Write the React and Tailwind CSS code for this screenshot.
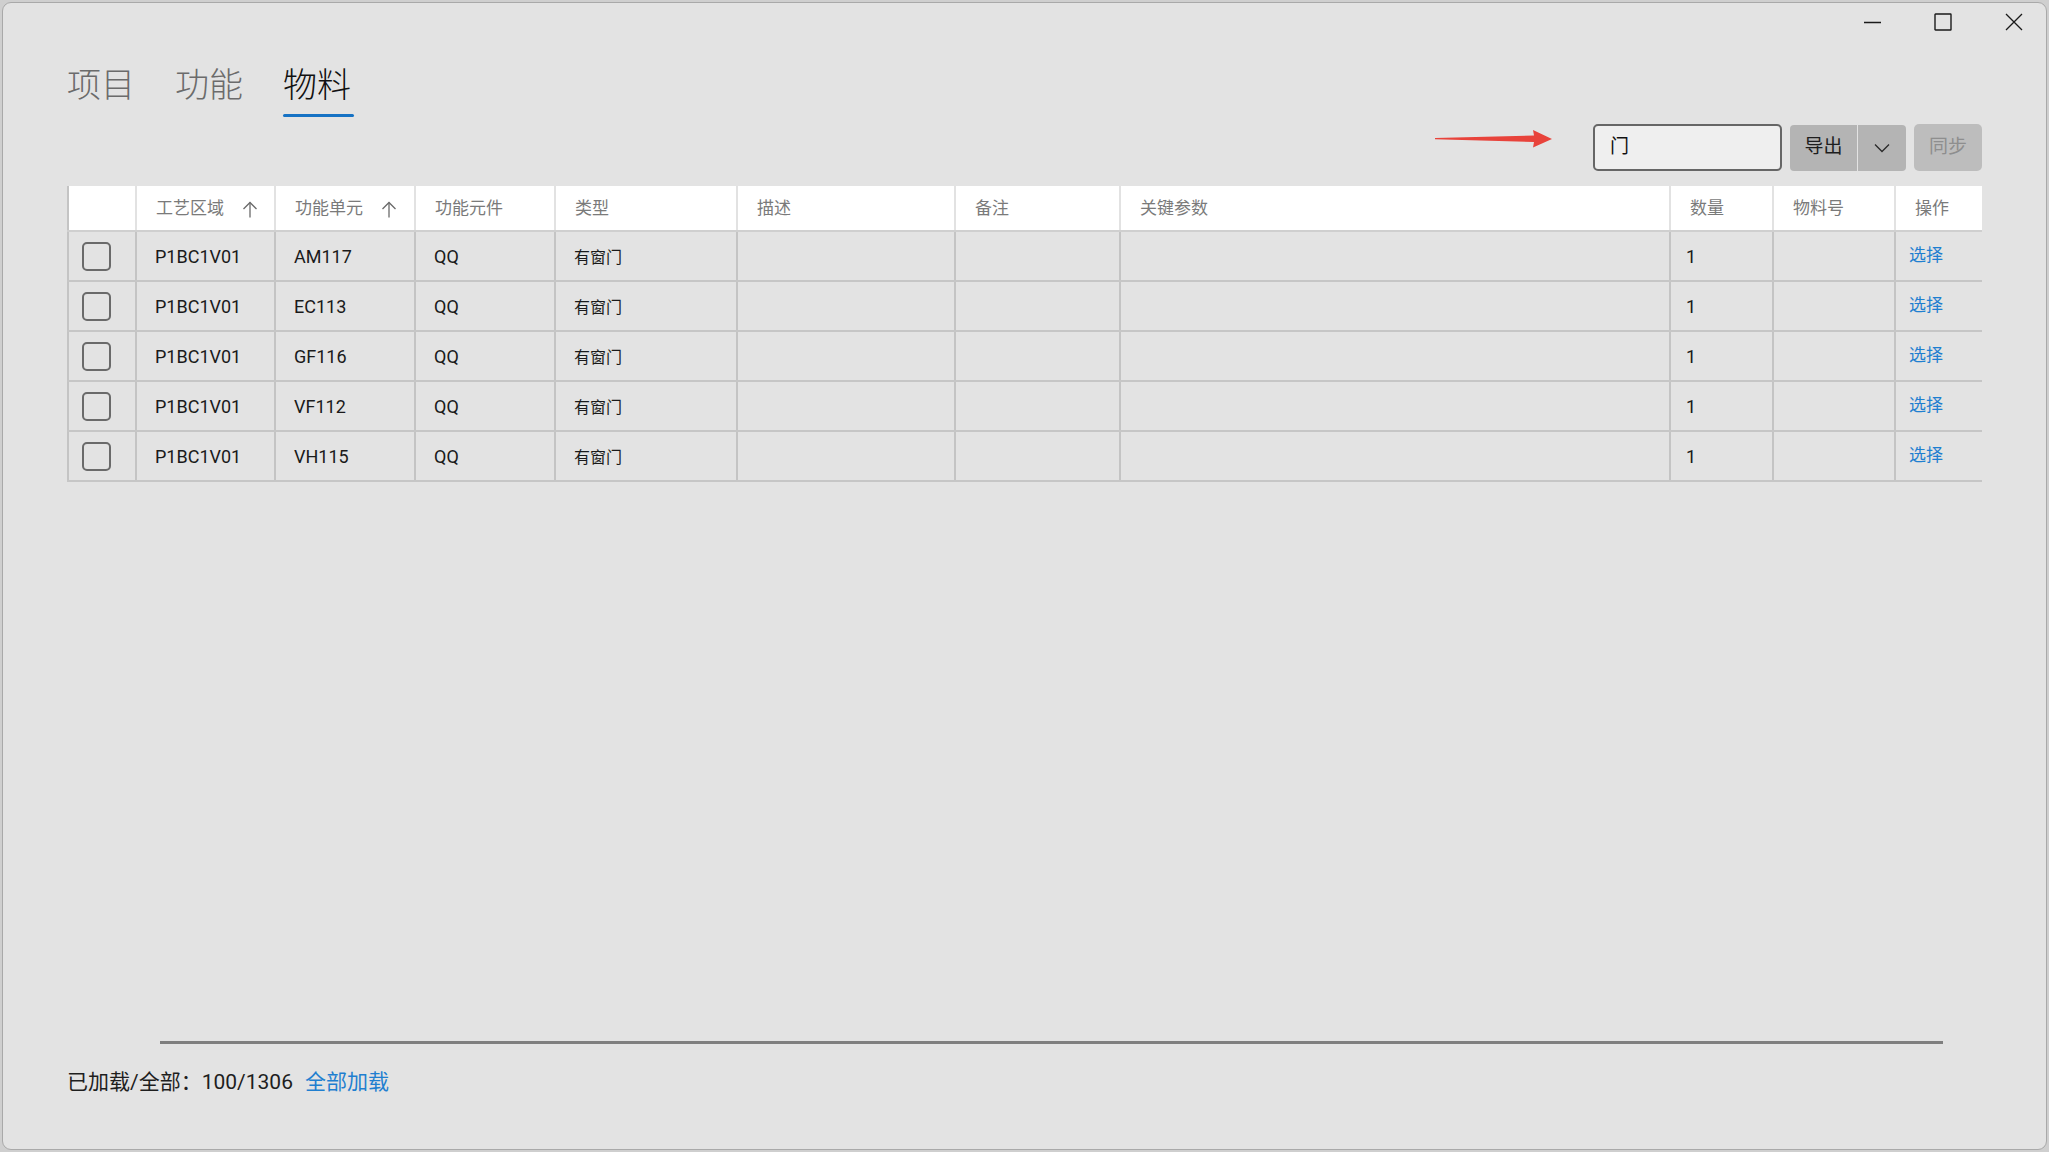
import React from 'react'

const cols = 'grid grid-cols-[68px_139px_140px_140px_182px_218px_165px_550px_103px_122px_88px]'

const headers = ['', '工艺区域', '功能单元', '功能元件', '类型', '描述', '备注', '关键参数', '数量', '物料号', '操作']

const rows = [
  ['P1BC1V01', 'AM117'],
  ['P1BC1V01', 'EC113'],
  ['P1BC1V01', 'GF116'],
  ['P1BC1V01', 'VF112'],
  ['P1BC1V01', 'VH115'],
]

const SortArrow = () => (
  <svg width="16" height="18" viewBox="0 0 16 18" fill="none" stroke="#6a6a6a" strokeWidth="1.3">
    <path d="M8 2.5V17.5" />
    <path d="M1.5 9L8 2.5L14.5 9" />
  </svg>
)

const WindowControls = () => (
  <div className="flex justify-end gap-[7px] h-[38px]">
    <div className="w-[64px] flex items-center justify-center">
      <svg width="18" height="18" viewBox="0 0 18 18" stroke="#1a1a1a" strokeWidth="1.3">
        <path d="M1 9.5H18" />
      </svg>
    </div>
    <div className="w-[64px] flex items-center justify-center">
      <svg width="18" height="18" viewBox="0 0 18 18" fill="none" stroke="#1a1a1a" strokeWidth="1.4">
        <rect x="1" y="1" width="16" height="16" rx="0.5" />
      </svg>
    </div>
    <div className="w-[64px] flex items-center justify-center">
      <svg width="18" height="18" viewBox="0 0 18 18" fill="none" stroke="#1a1a1a" strokeWidth="1.3">
        <path d="M1 1L17 17M17 1L1 17" />
      </svg>
    </div>
  </div>
)

const cell = 'flex items-center pl-[18px] border-l-2 border-[#c4c4c4] text-[18px] text-[#1a1a1a] whitespace-nowrap'

const App = () => {
  return (
    <div
      className="w-screen h-[1152px] bg-[#cfcfcf] p-[2px]"
      style={{ fontFamily: 'Roboto, "Noto Sans CJK SC", sans-serif' }}
    >
      <div className="h-full rounded-[9px] border border-[#a9a9a9] bg-[#e3e3e3] flex flex-col overflow-hidden">
        <WindowControls />

        <div className="px-[64px]">
          {/* tabs */}
          <div className="flex gap-[40px] mt-[22px]">
            <div className="flex flex-col">
              <span className="text-[34px] leading-[40px] text-[#6b6b6b]" style={{ fontFamily: '"Noto Sans CJK SC", sans-serif', fontWeight: 300 }}>项目</span>
              <div className="h-[3px] mt-[11px]" />
            </div>
            <div className="flex flex-col">
              <span className="text-[34px] leading-[40px] text-[#6b6b6b]" style={{ fontFamily: '"Noto Sans CJK SC", sans-serif', fontWeight: 300 }}>功能</span>
              <div className="h-[3px] mt-[11px]" />
            </div>
            <div className="flex flex-col">
              <span className="text-[34px] leading-[40px] text-[#111111]" style={{ fontFamily: '"Noto Sans CJK SC", sans-serif', fontWeight: 300 }}>物料</span>
              <div className="h-[3px] w-[71px] mt-[11px] bg-[#1672c4] rounded-full" />
            </div>
          </div>

          {/* toolbar */}
          <div className="flex justify-end items-center mt-[7px] h-[47px]">
            <svg className="mr-[40px] mb-[18px]" width="118" height="20" viewBox="0 0 118 20">
              <polygon points="0,9 99,6.5 98,1 117,10 98,18.5 99,13 0,10.2" fill="#e8433b" />
            </svg>
            <div className="w-[189px] h-[47px] rounded-[5px] border-2 border-[#666666] bg-[#efefef] flex items-center px-[15px]">
              <span className="text-[19px] text-[#111]">门</span>
            </div>
            <div className="flex ml-[8px] h-[46px]">
              <div className="w-[67px] bg-[#b4b4b4] rounded-l-[4px] flex items-center justify-center text-[19px] text-[#1e1e1e]">
                导出
              </div>
              <div className="w-[48px] ml-[1px] bg-[#b4b4b4] rounded-r-[4px] flex items-center justify-center">
                <svg width="16" height="10" viewBox="0 0 16 10" fill="none" stroke="#2a2a2a" strokeWidth="1.3">
                  <path d="M1 1.5L8 8.5L15 1.5" />
                </svg>
              </div>
            </div>
            <div className="w-[68px] h-[47px] ml-[8px] bg-[#bdbdbd] rounded-[5px] flex items-center justify-center text-[19px] text-[#8e8e8e]">
              同步
            </div>
          </div>

          {/* table */}
          <div className="mt-[15px]">
            <div className={`${cols} h-[46px] bg-white border-b-2 border-[#cfcfcf]`}>
              {headers.map((h, i) => (
                <div
                  key={i}
                  className={`flex items-center pl-[19px] pt-[1px] text-[17px] text-[#7a7a7a] whitespace-nowrap ${i === 0 ? 'border-l-2 border-[#c4c4c4]' : 'border-l-2 border-[#e2e2e2]'}`}
                >
                  <span>{h}</span>
                  {(i === 1 || i === 2) && (
                    <span className="ml-[18px] flex items-center">
                      <SortArrow />
                    </span>
                  )}
                </div>
              ))}
            </div>
            {rows.map((r, idx) => (
              <div key={idx} className={`${cols} h-[50px] border-b-2 border-[#c6c6c6]`}>
                <div className="flex items-center pl-[13px] border-l-2 border-[#c4c4c4]">
                  <div className="w-[29px] h-[29px] rounded-[5px] border-2 border-[#6a6a6a]" />
                </div>
                <div className={cell}>{r[0]}</div>
                <div className={cell}>{r[1]}</div>
                <div className={cell}>QQ</div>
                <div className={`${cell} pt-[3px] !text-[16px]`}>有窗门</div>
                <div className="border-l-2 border-[#c4c4c4]" />
                <div className="border-l-2 border-[#c4c4c4]" />
                <div className="border-l-2 border-[#c4c4c4]" />
                <div className={`${cell} !pl-[15px]`}>1</div>
                <div className="border-l-2 border-[#c4c4c4]" />
                <div className="flex items-center pl-[13px] border-l-2 border-[#c4c4c4] text-[17px] text-[#1f7fd0]">选择</div>
              </div>
            ))}
          </div>
        </div>

        <div className="flex-1" />

        {/* footer */}
        <div className="px-[64px] pb-[52px]">
          <div className="h-[3px] bg-[#7f7f7f] ml-[93px] mr-[39px]" />
          <div className="flex items-center mt-[25px] h-[28px] text-[21px]">
            <span className="text-[#1e1e1e]">已加载/全部：100/1306</span>
            <span className="ml-[12px] text-[#1f7fd0]">全部加载</span>
          </div>
        </div>
      </div>
    </div>
  )
}

export default App
